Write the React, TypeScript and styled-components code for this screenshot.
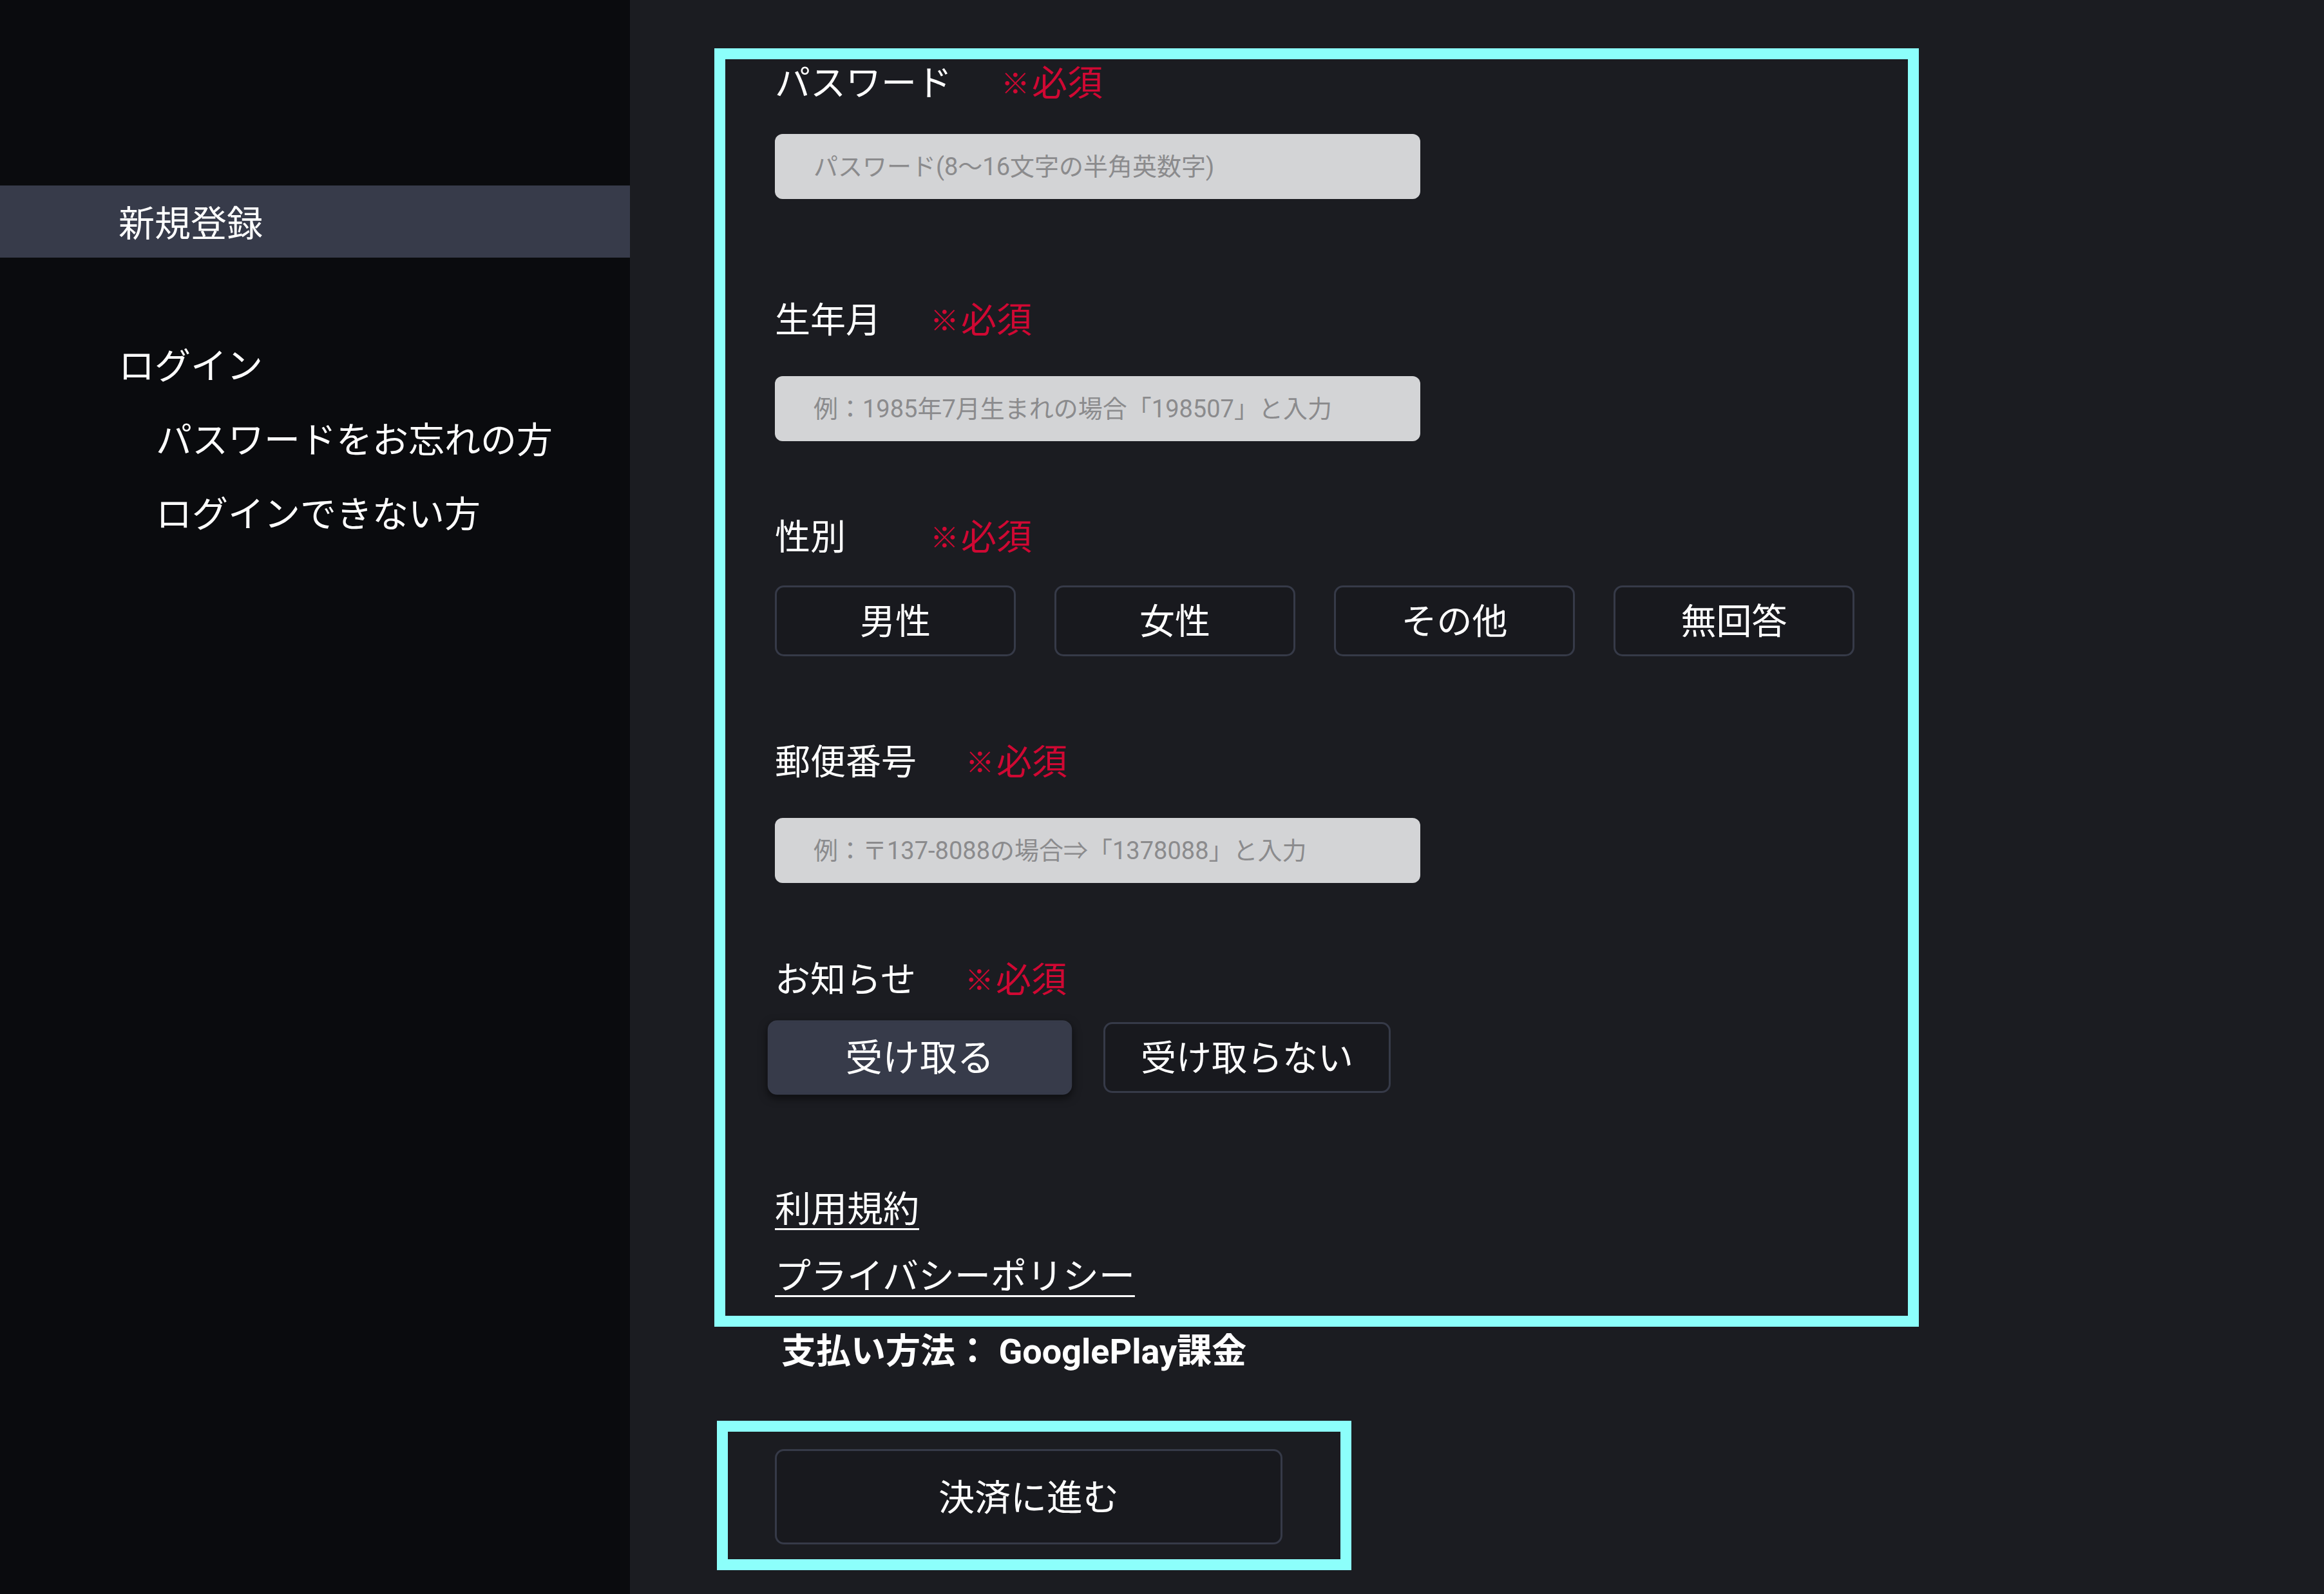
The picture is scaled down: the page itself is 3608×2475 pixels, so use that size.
import React, { FC } from "react";
import styled, { createGlobalStyle } from "styled-components";

const GlobalStyle = createGlobalStyle`
  html, body {
    margin: 0;
    padding: 0;
    background: #1b1c21;
  }
  body {
    font-family: Roboto, "Noto Sans CJK JP", sans-serif;
    color: #ffffff;
  }
  * {
    box-sizing: border-box;
  }
`;

const Page = styled.div`
  display: flex;
  min-height: 100vh;
  background: #1b1c21;
`;

const Sidebar = styled.nav`
  width: 978px;
  flex-shrink: 0;
  background: #0a0b0e;
  padding-top: 288px;
  display: flex;
  flex-direction: column;
`;

const NavItem = styled.div<{ $active?: boolean; $sub?: boolean; $gap?: number }>`
  display: flex;
  align-items: center;
  height: ${(p) => (p.$active ? 112 : 115)}px;
  margin-top: ${(p) => p.$gap ?? 0}px;
  padding-left: ${(p) => (p.$sub ? 242 : 184)}px;
  padding-bottom: 4px;
  background: ${(p) => (p.$active ? "#373b4a" : "transparent")};
  font-size: 56px;
  color: #ffffff;
  white-space: nowrap;
`;

const Main = styled.main`
  flex: 1;
  padding: 75px 0 0 131px;
`;

const HighlightBox = styled.div`
  width: 1870px;
  border: 17px solid #8cfffb;
  padding: 0 0 24px 77px;
`;

const Field = styled.section<{ $top: number }>`
  margin-top: ${(p) => p.$top}px;
  display: flex;
  flex-direction: column;
  align-items: flex-start;
`;

const LabelRow = styled.div<{ $below: number }>`
  display: flex;
  align-items: center;
  height: 74px;
  margin-bottom: ${(p) => p.$below}px;
  font-size: 55px;
  line-height: 74px;
`;

const LabelText = styled.span`
  min-width: 3em;
  margin-right: 76px;
  color: #ffffff;
`;

const Required = styled.span`
  display: flex;
  align-items: center;
  color: #d00833;
`;

const Mark = styled.span`
  font-size: 44px;
  margin-right: 4px;
  margin-top: 4px;
`;

const TextInput = styled.input`
  width: 1002px;
  height: 101px;
  border: none;
  border-radius: 12px;
  background: #d3d4d6;
  padding: 0 0 0 60px;
  font-family: Roboto, "Noto Sans CJK JP", sans-serif;
  font-size: 38px;
  color: #333;
  outline: none;

  &::placeholder {
    color: #8b8b8d;
  }
`;

const ChoiceRow = styled.div`
  display: flex;
  gap: 60px;
`;

const ChoiceButton = styled.button<{ $width: number; $selected?: boolean }>`
  width: ${(p) => p.$width}px;
  height: 110px;
  padding: 0 0 8px;
  border-radius: 14px;
  border: 3px solid ${(p) => (p.$selected ? "#373b4a" : "#363a48")};
  background: ${(p) => (p.$selected ? "#373b4a" : "#18191e")};
  color: #ffffff;
  font-family: Roboto, "Noto Sans CJK JP", sans-serif;
  font-size: 55px;
  display: flex;
  align-items: center;
  justify-content: center;
  transform: ${(p) => (p.$selected ? "scale(1.05)" : "none")};
  box-shadow: ${(p) => (p.$selected ? "0 5px 12px rgba(0, 0, 0, 0.55)" : "none")};
  cursor: pointer;
`;

const Links = styled.div`
  margin-top: 144px;
  display: flex;
  flex-direction: column;
  align-items: flex-start;
  gap: 30px;
`;

const TextLink = styled.a`
  font-size: 56px;
  line-height: 74px;
  color: #ffffff;
  text-decoration: underline;
  text-decoration-thickness: 3px;
  text-underline-offset: 10px;
`;

const Payment = styled.p`
  margin: 5px 0 0 104px;
  font-size: 54px;
  line-height: 68px;
  font-weight: 700;
  color: #ffffff;
`;

const SubmitBox = styled.div`
  margin: 73px 0 0 4px;
  width: 985px;
  border: 17px solid #8cfffb;
  padding: 27px 0 23px 73px;
`;

const SubmitButton = styled.button`
  width: 788px;
  height: 148px;
  padding: 0 0 8px;
  border: 3px solid #363a48;
  border-radius: 14px;
  background: #18191e;
  color: #ffffff;
  font-family: Roboto, "Noto Sans CJK JP", sans-serif;
  font-size: 56px;
  display: flex;
  align-items: center;
  justify-content: center;
  cursor: pointer;
`;

const FieldLabel: FC<{ text: string; below: number }> = ({ text, below }) => (
  <LabelRow $below={below}>
    <LabelText>{text}</LabelText>
    <Required>
      <Mark>※</Mark>必須
    </Required>
  </LabelRow>
);

const genders = ["男性", "女性", "その他", "無回答"];

const App: FC = () => {
  return (
    <Page>
      <GlobalStyle />
      <Sidebar>
        <NavItem $active>新規登録</NavItem>
        <NavItem $gap={108}>ログイン</NavItem>
        <NavItem $sub>パスワードをお忘れの方</NavItem>
        <NavItem $sub>ログインできない方</NavItem>
      </Sidebar>
      <Main>
        <HighlightBox>
          <Field $top={0}>
            <FieldLabel text="パスワード" below={42} />
            <TextInput readOnly placeholder="パスワード(8〜16文字の半角英数字)" />
          </Field>
          <Field $top={151}>
            <FieldLabel text="生年月" below={50} />
            <TextInput readOnly placeholder="例：1985年7月生まれの場合「198507」と入力" />
          </Field>
          <Field $top={112}>
            <FieldLabel text="性別" below={38} />
            <ChoiceRow>
              {genders.map((g) => (
                <ChoiceButton key={g} $width={374}>
                  {g}
                </ChoiceButton>
              ))}
            </ChoiceRow>
          </Field>
          <Field $top={127}>
            <FieldLabel text="郵便番号" below={50} />
            <TextInput readOnly placeholder="例：〒137-8088の場合⇒「1378088」と入力" />
          </Field>
          <Field $top={113}>
            <FieldLabel text="お知らせ" below={29} />
            <ChoiceRow>
              <ChoiceButton $width={450} $selected>
                受け取る
              </ChoiceButton>
              <ChoiceButton $width={446}>受け取らない</ChoiceButton>
            </ChoiceRow>
          </Field>
          <Links>
            <TextLink>利用規約</TextLink>
            <TextLink>プライバシーポリシー</TextLink>
          </Links>
        </HighlightBox>
        <Payment>支払い方法： GooglePlay課金</Payment>
        <SubmitBox>
          <SubmitButton>決済に進む</SubmitButton>
        </SubmitBox>
      </Main>
    </Page>
  );
};

export default App;
